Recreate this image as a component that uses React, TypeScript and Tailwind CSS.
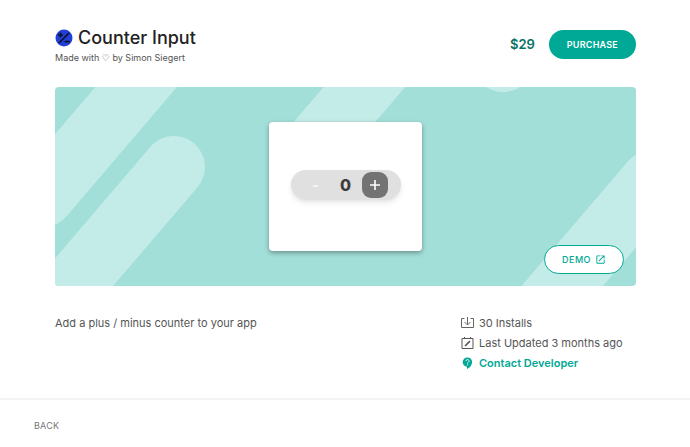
import type { ReactNode } from 'react';
import { useState } from 'react';
import { MdOpenInNew } from 'react-icons/md';

function CounterLogo() {
  return (
    <svg viewBox="0 0 18 18" className="w-[18px] h-[18px] shrink-0" aria-hidden="true">
      <circle cx="9" cy="9" r="8.5" fill="#2140d8" />
      <path d="M4 14 14 4M3 6h5M5.500 3.500v5M9.800 12.600h5" stroke="#0b1024" strokeWidth="1.700" fill="none" />
    </svg>
  );
}

function InstallIcon() {
  return (
    <svg viewBox="0 0 13 12" className="w-[13px] h-3" fill="none" stroke="#666" aria-hidden="true">
      <path d="M3.500 1.500h-3v9h12v-9h-3" />
      <path d="M6.500 0v7.500M3.500 5l3 3 3-3" />
    </svg>
  );
}

function UpdatedIcon() {
  return (
    <svg viewBox="0 0 13 12" className="w-[13px] h-3" fill="none" stroke="#555" aria-hidden="true">
      <path d="M1 1.500h11v10H1zM3.500 0v2M9.500 0v2" />
      <path d="m4 9 5-4.800" strokeWidth="1.700" />
    </svg>
  );
}

function ContactIcon() {
  return (
    <svg viewBox="0 0 13 12" className="w-[13px] h-3" aria-hidden="true">
      <path d="M6.500.5a4.600 4.600 0 0 0-.5 9.200V12c3.200-1.300 5.100-4.200 5.100-6.900A4.600 4.600 0 0 0 6.500.5z" fill="#00a896" />
      <path d="M5 4.100a1.500 1.500 0 1 1 2.300 1.200c-.6.4-.8.600-.8 1.200M6.500 7.300v1" stroke="#fff" strokeWidth=".9" fill="none" />
    </svg>
  );
}

function BannerPattern() {
  return (
    <svg
      viewBox="0 0 581 199"
      preserveAspectRatio="xMidYMid slice"
      className="absolute inset-0 w-full h-full"
      aria-hidden="true"
    >
      <g stroke="#c3ebe7" strokeWidth="62" strokeLinecap="round">
        <path d="M-12 109 159-91" />
        <path d="M119 80-52 280" />
        <path d="M253 66 424-134" />
        <path d="M448-26 619-226" />
        <path d="M597 94 426 294" />
      </g>
    </svg>
  );
}

function Counter() {
  const [count, setCount] = useState(0);

  return (
    <div className="flex items-center justify-between w-[110px] h-[29px] px-3 rounded-full bg-[#e0e0e0] shadow-md">
      <button
        type="button"
        aria-label="Decrease"
        className="w-[26px] h-[26px] text-base font-bold leading-none text-[#f5f5f5]"
        onClick={() => setCount(Math.max(0, count - 1))}
      >
        -
      </button>
      <span className="text-base leading-none font-extrabold text-[#3c3c3c]">{count}</span>
      <button
        type="button"
        aria-label="Increase"
        className="flex items-center justify-center w-[26px] h-[26px] rounded-[9px] bg-[#737373] text-white"
        onClick={() => setCount(count + 1)}
      >
        <svg viewBox="0 0 10 10" className="w-[10px] h-[10px]" stroke="currentColor" strokeWidth="1.6" aria-hidden="true">
          <path d="M5 0v10M0 5h10" />
        </svg>
      </button>
    </div>
  );
}

function Detail({ icon, children }: { icon: ReactNode; children: ReactNode }) {
  return (
    <li className="flex items-center gap-[5px] h-5">
      {icon}
      {children}
    </li>
  );
}

export default function App() {
  return (
    <div className="bg-white text-[#555] font-['Inter',sans-serif]">
      <main className="pl-[55px] pr-[54px] pt-7">
        <header className="flex items-start justify-between">
          <div>
            <div className="flex items-center gap-[5px] h-5">
              <CounterLogo />
              <h1 className="text-lg leading-5 font-medium text-[#222]">Counter Input</h1>
            </div>
            <p className="mt-1 h-3 text-[9px] leading-3">
              Made with <span className="font-['DejaVu_Sans',sans-serif]">♡</span> by Simon Siegert
            </p>
          </div>
          <div className="flex items-center gap-[14px] pt-[2px]">
            <span className="text-[13px] font-semibold text-[#077362]">$29</span>
            <button
              type="button"
              className="h-[29px] px-[18px] rounded-full bg-[#00a896] text-white text-[9px] font-semibold tracking-wide"
            >
              PURCHASE
            </button>
          </div>
        </header>

        <section className="relative flex items-center justify-center h-[199px] mt-[23px] rounded-[4px] overflow-hidden bg-[#a3dfd9]">
          <BannerPattern />
          <div className="relative flex items-center justify-center w-[153px] h-[129px] pb-1 rounded-[4px] bg-white shadow-[0_2px_5px_rgba(0,0,0,0.35)]">
            <Counter />
          </div>
          <a
            href="#demo"
            className="absolute right-3 bottom-3 flex items-center justify-center gap-1 w-20 h-[29px] rounded-full border border-[#00a896] bg-white text-[#00a896] text-[9px] font-medium tracking-wider"
          >
            DEMO
            <MdOpenInNew className="w-[11px] h-[11px]" aria-hidden="true" />
          </a>
        </section>

        <section className="flex justify-between gap-6 pt-[27px] pb-[25px] text-[11px] leading-5">
          <p>Add a plus / minus counter to your app</p>
          <ul className="w-[175px] shrink-0 whitespace-nowrap">
            <Detail icon={<InstallIcon />}>30 Installs</Detail>
            <Detail icon={<UpdatedIcon />}>Last Updated 3 months ago</Detail>
            <Detail icon={<ContactIcon />}>
              <a href="#contact" className="font-semibold text-[#00a896]">
                Contact Developer
              </a>
            </Detail>
          </ul>
        </section>
      </main>

      <footer className="border-t-2 border-[#f3f3f3] px-[34px] py-[18px]">
        <a href="#back" className="block text-[9px] leading-4 tracking-wide text-[#777]">
          BACK
        </a>
      </footer>
    </div>
  );
}
